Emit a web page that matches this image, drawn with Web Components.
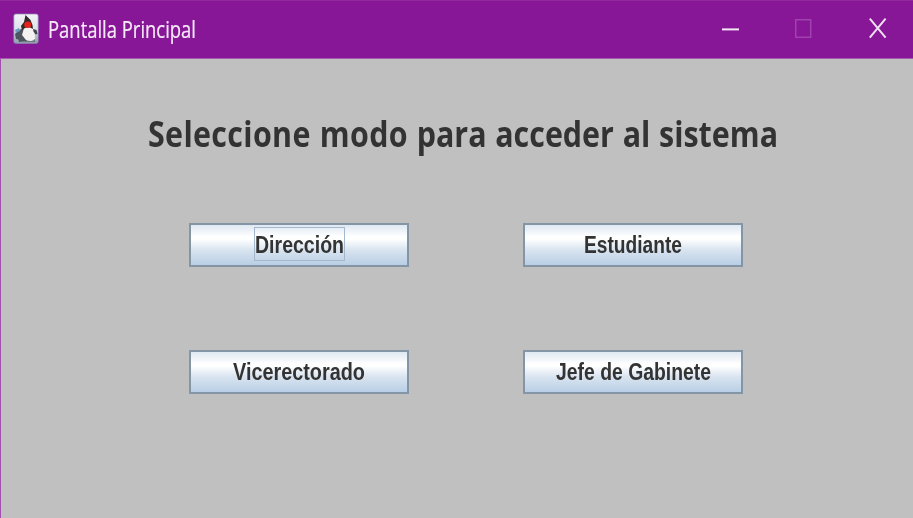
<!DOCTYPE html>
<html lang="es"><head><meta charset="utf-8"><title>Pantalla Principal</title>
<style>html,body{margin:0;width:913px;height:518px;overflow:hidden;background:#c0c0c0}</style></head>
<body>
<app-window><mode-panel></mode-panel></app-window>
<script>
// Text condensed horizontally to the advance width given in the "width" attribute.
class FitText extends HTMLElement{
  connectedCallback(){
    if(this.shadowRoot)return;
    this.attachShadow({mode:'open'}).innerHTML=`<style>:host{display:block;flex:none;white-space:nowrap;line-height:1}
      span{display:inline-block;transform-origin:0 50%;vertical-align:top}</style><span><slot></slot></span>`;
    const w=+this.getAttribute('width'),s=this.shadowRoot.querySelector('span');
    this.style.width=w+'px';
    s.style.transform=`scaleX(${w/s.getBoundingClientRect().width})`;
  }
}
class JavaIcon extends HTMLElement{
  constructor(){super();this.attachShadow({mode:'open'}).innerHTML=`<style>:host{display:block;width:26px;height:31px}svg{display:block}</style>
  <svg width="26" height="31" viewBox="0 0 26 31"><defs><linearGradient id="g" x2="0" y2="1"><stop stop-color="#f2f3f7"/><stop offset=".55" stop-color="#dbe1e9"/><stop offset="1" stop-color="#8d9caa"/></linearGradient><filter id="b" x="-10%" y="-10%" width="120%" height="120%"><feGaussianBlur stdDeviation=".6"/></filter></defs>
  <rect x=".8" y="1" width="24.4" height="29.4" rx="2" fill="url(#g)" stroke="#8d84b0" stroke-width=".7"/>
  <g filter="url(#b)"><path d="M2 21l4-4 5-2 2 7-5 5-5-1z" fill="#4c5661"/><path d="M2 17l4-2 1 3-4 2z" fill="#6a9bc0"/><path d="M5 25l6-3 3 6-8 1z" fill="#4e565e"/>
  <path d="M11 15l8-2 2.500 6 .5 7-4 2-5-1-4-5z" fill="#f4f3f2"/>
  <path d="M12.500 2l5 5 2 5 .5 4-4-2-4 1-3 2-1-4 3-4z" fill="#34292b"/><path d="M20 16l3.500 1 1 4-2 .5-2-3z" fill="#41454d"/>
  <path d="M10 28h10l2-2v3H10z" fill="#6f7880"/><ellipse cx="14.700" cy="11.800" rx="3.500" ry="3.200" fill="#e3231d"/></g></svg>`}
}
class WindowControls extends HTMLElement{
  constructor(){super();this.attachShadow({mode:'open'}).innerHTML=`<style>:host{display:block;width:213px;height:58px}svg{display:block}</style>
  <svg width="213" height="58" fill="none"><path d="M22 29.400h17" stroke="#f5e9f7" stroke-width="2"/><rect x="95.700" y="19.700" width="15" height="17.600" stroke="#a143ae" stroke-width="1.500"/><path d="M169.800 18.700l15.800 19M185.600 18.700l-15.800 19" stroke="#f0def3" stroke-width="2"/></svg>`}
}
class TitleBar extends HTMLElement{
  constructor(){super();this.attachShadow({mode:'open'}).innerHTML=`<style>
  :host{display:flex;box-sizing:border-box;height:59px;background:#881798;border-top:1px solid #8f2a9e;border-bottom:1px solid #a55caf;padding:0 0 0 13px}
  java-icon{margin-top:12px}fit-text{margin:17px 0 0 9px;font:23px/1 "Open Sans",sans-serif;color:#f6eaf8;-webkit-text-stroke:.2px #f6eaf8}
  window-controls{margin:-1px 0 0 auto}</style>
  <java-icon></java-icon><fit-text width="148"><slot></slot></fit-text><window-controls></window-controls>`}
}
class MetalButton extends HTMLElement{
  constructor(){super();this.attachShadow({mode:'open'}).innerHTML=`<style>
  :host{display:block;width:220px;height:44px}
  button{all:unset;box-sizing:border-box;display:flex;align-items:center;justify-content:center;width:100%;height:100%;border:2px solid #8495a5;background:linear-gradient(#dfe8f2 0,#fff 30%,#fdfefe 36%,#d9e4f0 62%,#b9cfe5 100%);font:bold 24px/1 "Liberation Sans",Arial,sans-serif;color:#333}
  div{box-sizing:border-box;height:34px;margin-bottom:2px;padding:5px 0 0;border:1px solid transparent}
  :host([focused]) div{border-color:#a3b8cc}</style>
  <button><div><fit-text width="${this.getAttribute('text-width')}"><slot></slot></fit-text></div></button>`}
}
class ModePanel extends HTMLElement{
  constructor(){super();this.attachShadow({mode:'open'}).innerHTML=`<style>
  :host{display:block}h1{margin:0;padding:57px 0 0 147px;height:107px;font:bold 36px/1 "Open Sans",sans-serif;word-spacing:1px;color:#333}
  h1 span{letter-spacing:.4px}
  section{display:grid;grid-template-columns:220px 220px;grid-auto-rows:44px;gap:83px 114px;padding-left:188px}</style>
  <h1><fit-text width="630"><span>Seleccione modo</span> para acceder al sistema</fit-text></h1>
  <section><metal-button focused text-width="89">Dirección</metal-button><metal-button text-width="98">Estudiante</metal-button>
  <metal-button text-width="132">Vicerectorado</metal-button><metal-button text-width="155">Jefe de Gabinete</metal-button></section>`}
}
class AppWindow extends HTMLElement{
  constructor(){super();this.attachShadow({mode:'open'}).innerHTML=`<style>
  :host{display:block;width:913px;height:518px;background:#c0c0c0;overflow:hidden}main{border-left:1px solid #a04fae;height:459px}</style>
  <title-bar>Pantalla Principal</title-bar><main><slot></slot></main>`}
}
customElements.define('app-window',AppWindow);
customElements.define('title-bar',TitleBar);
customElements.define('java-icon',JavaIcon);
customElements.define('window-controls',WindowControls);
customElements.define('mode-panel',ModePanel);
customElements.define('metal-button',MetalButton);
// Defined last, so that every label is measured inside its finished parent.
customElements.define('fit-text',FitText);
</script></body></html>
